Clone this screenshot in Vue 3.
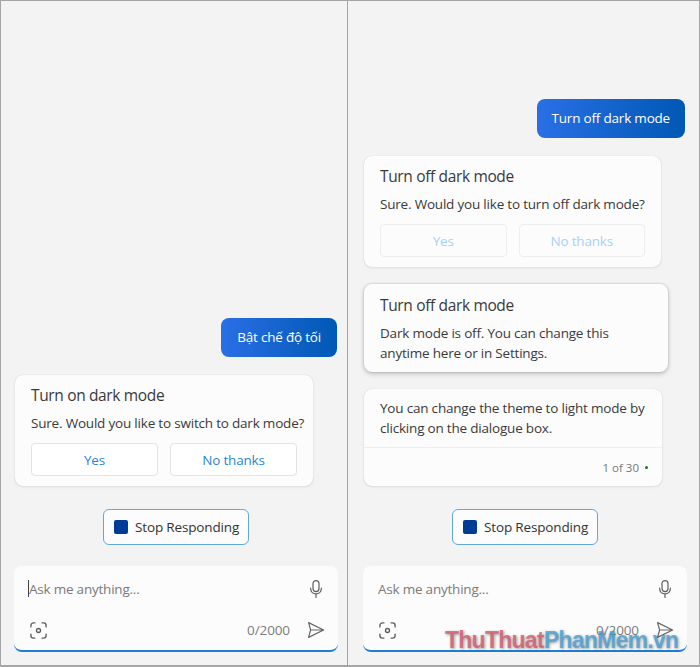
<script setup>
const stopLabel = "Stop Responding"
const placeholder = "Ask me anything..."
</script>

<template>
	<div class="screen">
		<section class="panel panel-left">
			<div class="bubble">Bật chế độ tối</div>
			<div class="card card-left">
				<h3 class="card-title">Turn on dark mode</h3>
				<p class="card-text">Sure. Would you like to switch to dark mode?</p>
				<div class="card-buttons">
					<button type="button" class="choice">Yes</button>
					<button type="button" class="choice">No thanks</button>
				</div>
			</div>
			<button type="button" class="stop">
				<span class="stop-square"></span>{{ stopLabel }}
			</button>
			<div class="composer">
				<div class="composer-top">
					<span class="caret"></span>
					<span class="placeholder">{{ placeholder }}</span>
					<svg class="icon mic" viewBox="0 0 20 20" width="20" height="20" fill="none" stroke="#5f5f5f" stroke-width="1.2" stroke-linecap="round">
						<rect x="7" y="1.6" width="6" height="11" rx="3" />
						<path d="M4.6 9.2c0 3.4 2.3 5.6 5.4 5.6s5.4-2.2 5.4-5.6M10 14.8v3.6" />
					</svg>
				</div>
				<div class="composer-bottom">
					<svg class="icon" viewBox="0 0 18 18" width="19" height="19" fill="none" stroke="#5f5f5f" stroke-width="1.3" stroke-linecap="round">
						<path d="M1.8 5.6V4.2a2.4 2.4 0 0 1 2.4-2.4h1.4M12.4 1.8h1.4a2.4 2.4 0 0 1 2.4 2.4v1.4M16.2 12.4v1.4a2.4 2.4 0 0 1-2.4 2.4h-1.4M5.6 16.2H4.2a2.4 2.4 0 0 1-2.4-2.4v-1.4" />
						<circle cx="9" cy="9" r="1.9" />
					</svg>
					<span class="count">0/2000</span>
					<svg class="icon send" viewBox="0 0 18 18" width="18" height="18" fill="none" stroke="#666" stroke-width="1.2" stroke-linejoin="round">
						<path d="M1.6 1.6 16.6 9 1.6 16.4 3.6 9zM3.6 9h13" />
					</svg>
				</div>
			</div>
		</section>

		<section class="panel panel-right">
			<div class="bubble">Turn off dark mode</div>
			<div class="card card-off">
				<h3 class="card-title">Turn off dark mode</h3>
				<p class="card-text">Sure. Would you like to turn off dark mode?</p>
				<div class="card-buttons">
					<button type="button" class="choice choice-off">Yes</button>
					<button type="button" class="choice choice-off">No thanks</button>
				</div>
			</div>
			<div class="card card-done">
				<h3 class="card-title">Turn off dark mode</h3>
				<p class="card-text">Dark mode is off. You can change this anytime here or in Settings.</p>
			</div>
			<div class="card card-theme">
				<p class="theme-text">You can change the theme to light mode by clicking on the dialogue box.</p>
				<div class="theme-foot">
					<span>1 of 30</span><span class="dot"></span>
				</div>
			</div>
			<button type="button" class="stop">
				<span class="stop-square"></span>{{ stopLabel }}
			</button>
			<div class="composer">
				<div class="composer-top">
					<span class="placeholder">{{ placeholder }}</span>
					<svg class="icon mic" viewBox="0 0 20 20" width="20" height="20" fill="none" stroke="#5f5f5f" stroke-width="1.2" stroke-linecap="round">
						<rect x="7" y="1.6" width="6" height="11" rx="3" />
						<path d="M4.6 9.2c0 3.4 2.3 5.6 5.4 5.6s5.4-2.2 5.4-5.6M10 14.8v3.6" />
					</svg>
				</div>
				<div class="composer-bottom">
					<svg class="icon" viewBox="0 0 18 18" width="19" height="19" fill="none" stroke="#5f5f5f" stroke-width="1.3" stroke-linecap="round">
						<path d="M1.8 5.6V4.2a2.4 2.4 0 0 1 2.4-2.4h1.4M12.4 1.8h1.4a2.4 2.4 0 0 1 2.4 2.4v1.4M16.2 12.4v1.4a2.4 2.4 0 0 1-2.4 2.4h-1.4M5.6 16.2H4.2a2.4 2.4 0 0 1-2.4-2.4v-1.4" />
						<circle cx="9" cy="9" r="1.9" />
					</svg>
					<span class="count">0/2000</span>
					<svg class="icon send" viewBox="0 0 18 18" width="18" height="18" fill="none" stroke="#666" stroke-width="1.2" stroke-linejoin="round">
						<path d="M1.6 1.6 16.6 9 1.6 16.4 3.6 9zM3.6 9h13" />
					</svg>
				</div>
			</div>
		</section>

		<div class="watermark"><span class="wm-red">ThuThuat</span><span class="wm-blue">PhanMem.vn</span></div>
	</div>
</template>

<style scoped>
.screen {
	position: relative;
	display: flex;
	width: 700px;
	height: 667px;
	overflow: hidden;
	box-sizing: border-box;
	background: #f3f3f3;
	border: 1px solid #a5a5a5;
	border-bottom-width: 2px;
	font-family: "Open Sans", "Noto Sans", sans-serif;
	color: #3a3a3a;
}

.panel {
	display: flex;
	flex-direction: column;
	justify-content: flex-end;
	padding-bottom: 13px;
	box-sizing: border-box;
}

.panel-left {
	width: 347px;
	border-right: 1px solid #a5a5a5;
	padding-left: 13px;
	padding-right: 9px;
}

.panel-right {
	width: 351px;
	padding-left: 15px;
	padding-right: 12px;
}

.bubble {
	align-self: flex-end;
	height: 39px;
	margin-right: 1px;
	margin-bottom: 18px;
	padding: 0 15px;
	line-height: 39px;
	font-size: 13.5px;
	letter-spacing: -0.2px;
	color: #fff;
	white-space: nowrap;
	border-radius: 8px;
	background: linear-gradient(90deg, #2a6fe6, #0058b4);
}

.panel-left .bubble {
	padding: 0 16px;
}

.panel-right .bubble {
	margin-right: 2px;
}

.card {
	box-sizing: border-box;
	margin-left: 1px;
	padding: 0 16px;
	background: #fcfcfc;
	border-radius: 8px;
	box-shadow: 0 0 1px rgba(0, 0, 0, 0.18), 0 1px 3px rgba(0, 0, 0, 0.08);
}

.card-left {
	width: 298px;
	height: 111px;
	margin-bottom: 23px;
}

.card-off {
	width: 297px;
	height: 111px;
	margin-bottom: 17px;
}

.card-done {
	width: 304px;
	height: 88px;
	margin-bottom: 17px;
	box-shadow: 0 0 2px rgba(0, 0, 0, 0.25), 0 2px 5px rgba(0, 0, 0, 0.2);
}

.card-theme {
	width: 298px;
	height: 97px;
	margin-bottom: 23px;
	padding: 0;
}

.card-title {
	margin: 0;
	padding-top: 9px;
	font-size: 15.5px;
	line-height: 22px;
	font-weight: 400;
	letter-spacing: -0.35px;
}

.card-text {
	margin: 8px 0 0;
	font-size: 13.5px;
	line-height: 19.5px;
	letter-spacing: -0.2px;
}

.card-done .card-title {
	padding-top: 10px;
}

.card-left .card-text,
.card-off .card-text {
	white-space: nowrap;
}

.card-buttons {
	display: flex;
	gap: 12px;
	margin-top: 9px;
}

.choice {
	flex: 1;
	height: 33px;
	padding: 1px 0 0;
	background: #fff;
	border: 1px solid #e3e3e3;
	border-radius: 4px;
	color: #1f86dc;
	font: inherit;
	font-size: 13.5px;
	letter-spacing: -0.2px;
}

.choice-off {
	background: #fcfcfc;
	border-color: #eeeeee;
	color: #a8d2f3;
}

.theme-text {
	margin: 0;
	padding: 10px 16px 0;
	height: 59px;
	box-sizing: border-box;
	font-size: 13.5px;
	line-height: 19.5px;
	letter-spacing: -0.2px;
	border-bottom: 1px solid #efefef;
}

.theme-foot {
	display: flex;
	align-items: center;
	justify-content: flex-end;
	gap: 6px;
	height: 38px;
	padding-right: 14px;
	font-size: 11.5px;
	color: #777;
}

.dot {
	width: 3px;
	height: 3px;
	border-radius: 50%;
	background: #107c10;
}

.stop {
	align-self: center;
	display: flex;
	align-items: center;
	gap: 7px;
	width: 146px;
	height: 36px;
	box-sizing: border-box;
	padding: 0 0 0 10px;
	background: #fcfcfc;
	border: 1px solid #5fa8e4;
	border-radius: 6px;
	color: #333;
	font: inherit;
	font-size: 13.5px;
	letter-spacing: -0.15px;
	white-space: nowrap;
	margin-bottom: 21px;
}

.stop-square {
	width: 14px;
	height: 14px;
	border-radius: 2px;
	background: #003b95;
}

.composer {
	box-sizing: border-box;
	height: 86px;
	padding: 12px 13px 0 15px;
	background: #fcfcfc;
	border-radius: 8px;
	border-bottom: 2px solid #1b7fd8;
}

.composer-top {
	position: relative;
	display: flex;
	align-items: center;
	justify-content: space-between;
	height: 22px;
}

.composer-bottom {
	display: flex;
	align-items: center;
	margin-top: 19px;
	height: 22px;
}

.placeholder {
	font-size: 13.5px;
	letter-spacing: -0.22px;
	color: #7a7a7a;
}

.caret {
	position: absolute;
	left: -1px;
	top: 2px;
	width: 1px;
	height: 17px;
	background: #444;
}

.icon {
	flex-shrink: 0;
}

.mic {
	margin-right: -1px;
}

.count {
	margin-left: auto;
	font-size: 13.5px;
	letter-spacing: -0.1px;
	color: #7d7d7d;
}

.send {
	margin-left: 17px;
}

.watermark {
	position: absolute;
	left: 444px;
	top: 624px;
	font-family: "Liberation Sans", sans-serif;
	font-size: 23px;
	font-weight: 700;
	line-height: 30px;
	letter-spacing: -0.75px;
	white-space: nowrap;
	text-shadow: 1px 1px 3px rgba(60, 60, 60, 0.5);
}

.wm-red {
	color: rgba(214, 88, 110, 0.8);
}

.wm-blue {
	color: rgba(70, 160, 215, 0.8);
}
</style>

<style>
html, body {
	margin: 0;
	background: #f3f3f3;
}
</style>
